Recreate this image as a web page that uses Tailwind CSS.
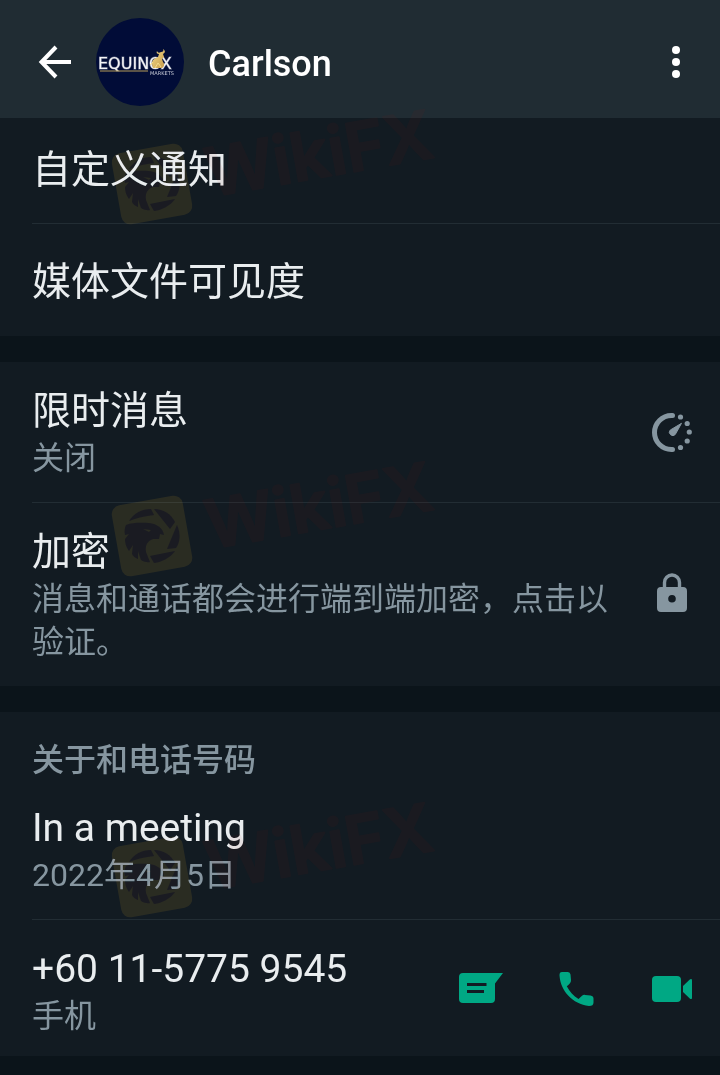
<!DOCTYPE html>
<html lang="zh-CN">
<head>
  <meta charset="UTF-8" />
  <meta name="viewport" content="width=device-width,initial-scale=1.0" />
  <title>Carlson</title>
  <script src="https://cdn.jsdelivr.net/npm/@tailwindcss/browser@4"></script>
</head>
<body class="relative min-h-screen overflow-x-hidden bg-[#0b141a] text-[#e9edef] font-[Roboto,'Noto_Sans_CJK_SC',sans-serif]">

  <header class="flex items-center h-[118px] pt-[6px] pl-[38px] pr-[28px] bg-[#202c33]">
    <button aria-label="返回" class="text-white">
      <svg class="w-[34px] h-[34px]" viewBox="0 0 34 34" fill="none" stroke="currentColor" stroke-width="4">
        <path d="M33 17H4M18 2L3.500 17L18 32" />
      </svg>
    </button>
    <svg class="ml-6 w-[88px] h-[88px]" viewBox="0 0 88 88" role="img" aria-label="Equinox Markets">
      <defs>
        <linearGradient id="gold" x1="0" x2="1" y1="0" y2="1">
          <stop offset="0" stop-color="#f3dc8c" />
          <stop offset="1" stop-color="#c69a48" />
        </linearGradient>
      </defs>
      <circle cx="44" cy="44" r="44" fill="#010c37" />
      <text x="2" y="51" font-family="DejaVu Sans, sans-serif" font-size="16" fill="#f4f5f8" stroke="#f4f5f8" stroke-opacity=".4" stroke-width="1">EQUINOX</text>
      <path d="M4 53H52" stroke="#b59a58" stroke-width="1" />
      <text x="54" y="57" font-family="DejaVu Sans, sans-serif" font-size="5" fill="#c9ccd8">MARKETS</text>
      <!-- bull -->
      <path d="M61 33C62 35 63 35 65 34C67 34 68 33 67 31C70 33 69 35 67 36L68 39L66 41L67 44C69 46 68 49 66 50L57 50C56 48 56 46 56 44C57 41 60 40 62 39L63 36C61 36 60 35 61 33Z" fill="url(#gold)" />
      <path d="M57 44L54 47M59 50L62 45L65 49" stroke="#f3dc8c" stroke-width="1" fill="none" />
    </svg>
    <h1 class="ml-6 flex-1 pt-1 text-[36px] leading-[44px] font-medium text-white">Carlson</h1>
    <button aria-label="更多选项" class="text-white">
      <svg class="w-8 h-10" viewBox="0 0 32 40" fill="currentColor">
        <circle cx="16" cy="8" r="4" />
        <circle cx="16" cy="20" r="4" />
        <circle cx="16" cy="32" r="4" />
      </svg>
    </button>
  </header>

  <main class="space-y-[26px]">
    <section class="bg-[#121b22] pl-8">
      <button class="block w-full h-[106px] text-left text-[39px] leading-[51px] border-b border-[#222d34]">自定义通知</button>
      <button class="block w-full h-[112px] pt-1 text-left text-[39px] leading-[51px]">媒体文件可见度</button>
    </section>

    <section class="bg-[#121b22] pl-8">
      <button class="flex w-full items-center gap-10 pt-6 pb-[22px] pr-7 text-left border-b border-[#222d34]">
        <span class="flex-1">
          <span class="block text-[39px] leading-[51px]">限时消息</span>
          <span class="block text-[32px] leading-[43px] text-[#8696a0]">关闭</span>
        </span>
        <svg class="w-10 h-10 text-[#8696a0]" viewBox="0 1 40 40" fill="currentColor">
          <path d="M20.500 3.500H19.500A17 17 0 0 0 19.500 37.500H20.500" fill="none" stroke="currentColor" stroke-width="5" stroke-linecap="round" />
          <circle cx="28.500" cy="5" r="2.600" />
          <circle cx="35.200" cy="11.500" r="2.600" />
          <circle cx="37.300" cy="20" r="2.600" />
          <circle cx="35.200" cy="29" r="2.600" />
          <circle cx="28.500" cy="35.500" r="2.600" />
          <path d="M29.500 11.300 23.300 22.400A3.300 3.300 0 1 1 18.300 18Z" stroke="currentColor" stroke-linejoin="round" />
        </svg>
      </button>
      <button class="flex w-full items-center gap-10 pt-6 pb-[22px] pr-7 text-left">
        <span class="flex-1">
          <span class="block text-[39px] leading-[51px]">加密</span>
          <span class="block text-[32px] leading-[43px] text-[#8696a0]">消息和通话都会进行端到端加密，点击以验证。</span>
        </span>
        <svg class="w-10 h-10 text-[#8696a0]" viewBox="0 3 40 40" overflow="visible">
          <path d="M12.500 16V9.500a7.500 7.500 0 0 1 15 0V16" fill="none" stroke="currentColor" stroke-width="3.400" />
          <path fill="currentColor" fill-rule="evenodd" d="M9 14H31a4 4 0 0 1 4 4V35a4 4 0 0 1-4 4H9a4 4 0 0 1-4-4V18a4 4 0 0 1 4-4ZM20 22a3.800 3.800 0 1 0 0 7.600a3.800 3.800 0 1 0 0-7.600Z" />
        </svg>
      </button>
    </section>

    <section class="bg-[#121b22] pl-8">
      <h2 class="pt-[27px] text-[32px] leading-[43px] font-medium text-[#8696a0]">关于和电话号码</h2>
      <div class="pt-[21px] pb-[22px] border-b border-[#222d34]">
        <p class="text-[39px] leading-[51px]">In a meeting</p>
        <p class="text-[32px] leading-[43px] text-[#8696a0]">2022年4月5日</p>
      </div>
      <div class="flex items-center pt-6 pb-[18px] pr-[26px]">
        <div class="flex-1">
          <p class="text-[39px] leading-[51px]">+60 11-5775 9545</p>
          <p class="text-[32px] leading-[43px] text-[#8696a0]">手机</p>
        </div>
        <div class="flex items-center gap-[53px] pb-1 text-[#00a884]">
          <button aria-label="发消息">
            <svg class="w-[46px] h-10" viewBox="0 0 46 40" fill="currentColor">
              <path fill-rule="evenodd" d="M5 4H45L37 14.500V30a4 4 0 0 1-4 4H5a4 4 0 0 1-4-4V8a4 4 0 0 1 4-4ZM9 14V17H28.500V14ZM9 21V24H26V21Z" />
            </svg>
          </button>
          <button aria-label="语音通话">
            <svg class="w-10 h-10" viewBox="0 0 40 40" fill="currentColor">
              <path d="M5 3H10.500C12 3 13 3.800 13.500 5.500L14 11C14.200 13.500 12.500 15 9.800 17.200C12.500 22.500 16.500 27 21.500 30L25 26.700C26 25.800 27 25.800 28 25.900L33.500 26.500C35.500 26.800 36.500 28 36.500 29.500V33.500C36.500 36 35 37 32 37C15.500 35 3.500 22 2.500 6.500C2.400 4 3.300 3 5 3Z" />
            </svg>
          </button>
          <button aria-label="视频通话">
            <svg class="w-11 h-10" viewBox="0 0 44 40" fill="currentColor">
              <rect x="2" y="7" width="29" height="26" rx="4" />
              <path d="M33 17 39.500 10.800C41 9.400 42 9.800 42 11.500V28.500C42 30.200 41 30.600 39.500 29.200L33 23Z" />
            </svg>
          </button>
        </div>
      </div>
    </section>
    <div></div>
  </main>

  <!-- watermarks floating over the page -->
  <svg class="hidden">
    <symbol id="badge" viewBox="0 0 350 130">
      <path transform="rotate(-10 52 81)" fill="#ffc820" fill-opacity=".1" d="M25 45H79a9 9 0 0 1 9 9V108a9 9 0 0 1-9 9H25a9 9 0 0 1-9-9V54a9 9 0 0 1 9-9Z" />
      <!-- shutter ring with the eagle head inside -->
      <g fill="#1a1a20" fill-opacity=".95">
        <path d="M29 66C34 58 42 54 51 54L54 60C45 61 36 63 29 66Z" />
        <path d="M54 54C63 54 71 59 75 67L70 74Z" />
        <path d="M77 70C81 79 80 87 76 93L67 94Z" />
        <path d="M75 96C70 103 62 107 54 108L50 101Z" />
        <path fill-rule="evenodd" d="M26 70C34 67 43 68 49 68C57 69 63 73 64 80L60 79L59 84L53 84C47 86 45 91 46 97L50 107C45 108 41 105 41 105L38 96L38 104C35 103 33 101 32 99L33 90L29 96C26 92 25 88 25 84L29 79L25 80C24 76 25 72 26 70ZM43 74L49 77L51 75Z" />
      </g>
    </symbol>
    <symbol id="wordmark" viewBox="0 0 350 130">
      <text transform="translate(110 94) rotate(-10)" opacity=".06" font-family="Inter, sans-serif" font-weight="600" font-size="67" fill="#a01008" stroke="#a01008" stroke-width="2" stroke-linejoin="round">WikiFX</text>
    </symbol>
  </svg>
  <svg class="pointer-events-none absolute left-[100px] top-[103px] w-[350px] h-[130px] mix-blend-lighten" aria-hidden="true"><use href="#badge" /></svg>
  <svg class="pointer-events-none absolute left-[100px] top-[103px] w-[350px] h-[130px]" aria-hidden="true"><use href="#wordmark" /></svg>
  <svg class="pointer-events-none absolute left-[100px] top-[455px] w-[350px] h-[130px] mix-blend-lighten" aria-hidden="true"><use href="#badge" /></svg>
  <svg class="pointer-events-none absolute left-[100px] top-[455px] w-[350px] h-[130px]" aria-hidden="true"><use href="#wordmark" /></svg>
  <svg class="pointer-events-none absolute left-[100px] top-[796px] w-[350px] h-[130px] mix-blend-lighten" aria-hidden="true"><use href="#badge" /></svg>
  <svg class="pointer-events-none absolute left-[100px] top-[796px] w-[350px] h-[130px]" aria-hidden="true"><use href="#wordmark" /></svg>
</body>
</html>
